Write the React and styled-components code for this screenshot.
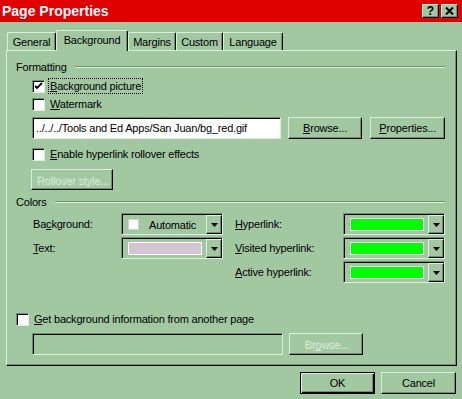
import React from 'react';
import styled, { createGlobalStyle } from 'styled-components';

const FACE = '#a2c8a2';
const LIGHT = '#dcefdc';
const SHADOW = '#6f8f6f';
const DARK = '#000';

const Global = createGlobalStyle`
  html, body { margin: 0; padding: 0; background: ${FACE}; }
  body { font-family: "Liberation Sans", Arial, sans-serif; font-size: 11px; letter-spacing: -0.2px; color: #000; }
  * { box-sizing: border-box; }
`;

const Window = styled.div`
  width: 462px;
  height: 399px;
  background: ${FACE};
  display: flex;
  flex-direction: column;
  overflow: hidden;
`;

const TitleBar = styled.div`
  height: 22px;
  background: #e00000;
  display: flex;
  align-items: center;
  padding: 0 4px 0 2px;
`;

const Title = styled.div`
  flex: 1;
  color: #fff;
  font-weight: bold;
  font-size: 14px;
  letter-spacing: 0;
`;

const TitleButton = styled.div`
  width: 17px;
  height: 14px;
  margin-left: ${p => p.$gap || 0}px;
  background: ${FACE};
  border-top: 1px solid ${LIGHT};
  border-left: 1px solid ${LIGHT};
  border-right: 1px solid ${DARK};
  border-bottom: 1px solid ${DARK};
  box-shadow: inset -1px -1px 0 ${SHADOW};
  display: flex;
  align-items: center;
  justify-content: center;
  font-weight: bold;
  font-size: 12px;
  line-height: 12px;
  letter-spacing: 0;
`;

const TabRow = styled.div`
  display: flex;
  align-items: flex-end;
  height: 20px;
  margin-top: 8px;
  padding-left: 7px;
  position: relative;
  z-index: 2;
`;

const Tab = styled.div`
  width: ${p => p.$w}px;
  height: ${p => (p.$active ? 21 : 18)}px;
  margin-bottom: ${p => (p.$active ? -1 : 0)}px;
  background: ${FACE};
  border-top: 1px solid ${LIGHT};
  border-left: 1px solid ${LIGHT};
  border-right: 1px solid ${DARK};
  border-radius: 2px 2px 0 0;
  box-shadow: inset -1px 0 0 ${SHADOW};
  display: flex;
  align-items: center;
  justify-content: center;
  padding-bottom: ${p => (p.$active ? 3 : 0)}px;
  position: relative;
  z-index: ${p => (p.$active ? 2 : 1)};
`;

const Panel = styled.div`
  margin: 0 5px 0 6px;
  height: 316px;
  border-top: 1px solid ${LIGHT};
  border-left: 1px solid ${LIGHT};
  border-right: 1px solid ${DARK};
  border-bottom: 1px solid ${DARK};
  box-shadow: inset -1px -1px 0 ${SHADOW};
  padding: 9px 11px 10px 9px;
  display: flex;
  flex-direction: column;
`;

const GroupHeader = styled.div`
  display: flex;
  align-items: center;
  height: 14px;
  gap: 8px;
  margin-top: ${p => p.$mt || 0}px;
  &::after {
    content: '';
    flex: 1;
    border-top: 1px solid ${SHADOW};
    border-bottom: 1px solid ${LIGHT};
  }
`;

const CheckRow = styled.div`
  display: flex;
  align-items: center;
  height: 16px;
  gap: 3px;
  margin-top: ${p => p.$mt || 0}px;
  padding-left: ${p => p.$indent || 0}px;
`;

const Box = styled.div`
  width: 13px;
  height: 13px;
  background: #fff;
  border-top: 1px solid ${SHADOW};
  border-left: 1px solid ${SHADOW};
  border-right: 1px solid ${LIGHT};
  border-bottom: 1px solid ${LIGHT};
  box-shadow: inset 1px 1px 0 ${DARK};
  display: flex;
  align-items: center;
  justify-content: center;
`;

const CheckLabel = styled.span`
  line-height: 14px;
  padding: 0 1px;
  border: 1px ${p => (p.$focus ? 'dotted #000' : 'solid transparent')};
`;

const FieldRow = styled.div`
  display: flex;
  align-items: center;
  height: 22px;
  margin-top: ${p => p.$mt || 0}px;
  padding-left: 16px;
`;

const TextField = styled.div`
  width: ${p => p.$w}px;
  height: 22px;
  background: ${p => (p.$disabled ? FACE : '#fff')};
  border-top: 1px solid ${SHADOW};
  border-left: 1px solid ${SHADOW};
  border-right: 1px solid ${LIGHT};
  border-bottom: 1px solid ${LIGHT};
  box-shadow: inset 1px 1px 0 ${DARK};
  padding: 0 2px 0 3px;
  display: flex;
  align-items: center;
  white-space: nowrap;
  overflow: hidden;
`;

const Button = styled.div`
  width: ${p => p.$w}px;
  height: ${p => p.$h || 22}px;
  margin-left: ${p => p.$ml || 0}px;
  background: ${FACE};
  border-top: 1px solid ${p => (p.$default ? DARK : LIGHT)};
  border-left: 1px solid ${p => (p.$default ? DARK : LIGHT)};
  border-right: 1px solid ${DARK};
  border-bottom: 1px solid ${DARK};
  box-shadow: ${p =>
    p.$default
      ? `inset 1px 1px 0 ${LIGHT}, inset -1px -1px 0 ${DARK}, inset -2px -2px 0 ${SHADOW}`
      : `inset -1px -1px 0 ${SHADOW}`};
  display: flex;
  align-items: center;
  justify-content: center;
  color: ${p => (p.$disabled ? '#b9d2b9' : '#000')};
  text-shadow: ${p => (p.$disabled ? `1px 1px 0 ${LIGHT}` : 'none')};
`;

const RolloverWrap = styled.div`
  margin-top: 7px;
  padding-left: 15px;
  display: flex;
`;

const ColorGrid = styled.div`
  margin-top: 4px;
  padding-left: 16px;
  display: grid;
  grid-template-columns: 89px 102px 120px 102px;
  grid-auto-rows: 22px;
  row-gap: 2px;
`;

const ColorLabel = styled.div`
  display: flex;
  align-items: center;
  padding-left: ${p => (p.$right ? 12 : 1)}px;
  grid-column: ${p => p.$col};
`;

const Dropdown = styled.div`
  grid-column: ${p => p.$col};
  height: 22px;
  display: flex;
  border-top: 1px solid ${SHADOW};
  border-left: 1px solid ${SHADOW};
  border-right: 1px solid ${LIGHT};
  border-bottom: 1px solid ${LIGHT};
  box-shadow: inset 1px 1px 0 ${DARK};
  padding: 1px 0 0 1px;
`;

const SwatchArea = styled.div`
  flex: 1;
  display: flex;
  align-items: center;
  padding: 0 4px 0 5px;
  gap: 10px;
`;

const Swatch = styled.div`
  flex: 1;
  height: 13px;
  background: ${p => p.$color};
  border: 1px solid #fff;
`;

const AutoBox = styled.div`
  width: 11px;
  height: 11px;
  background: #fff;
  border: 1px solid #c8d8c8;
`;

const ArrowButton = styled.div`
  width: 16px;
  background: ${FACE};
  border-top: 1px solid ${LIGHT};
  border-left: 1px solid ${LIGHT};
  border-right: 1px solid ${DARK};
  border-bottom: 1px solid ${DARK};
  box-shadow: inset -1px -1px 0 ${SHADOW};
  display: flex;
  align-items: center;
  justify-content: center;
`;

const Footer = styled.div`
  display: flex;
  justify-content: flex-end;
  gap: 6px;
  margin-top: 6px;
  padding-right: 6px;
`;

const Check = () => (
  <svg width="9" height="9" viewBox="0 0 9 9">
    <path d="M1 4 L3 6 L8 1" stroke="#000" strokeWidth="1.8" fill="none" />
  </svg>
);

const Arrow = () => (
  <svg width="7" height="4" viewBox="0 0 7 4">
    <path d="M0 0 H7 L3.5 4 Z" fill="#000" />
  </svg>
);

const CloseGlyph = () => (
  <svg width="9" height="8" viewBox="0 0 9 8">
    <path d="M1 0.5 L8 7.5 M8 0.5 L1 7.5" stroke="#000" strokeWidth="2" />
  </svg>
);

const ColorPicker = ({ col, color, auto }) => (
  <Dropdown $col={col}>
    <SwatchArea>
      {auto ? (
        <>
          <AutoBox />
          <span>Automatic</span>
        </>
      ) : (
        <Swatch $color={color} />
      )}
    </SwatchArea>
    <ArrowButton>
      <Arrow />
    </ArrowButton>
  </Dropdown>
);

export default function App() {
  return (
    <Window>
      <Global />
      <TitleBar>
        <Title>Page Properties</Title>
        <TitleButton>?</TitleButton>
        <TitleButton $gap={2}>
          <CloseGlyph />
        </TitleButton>
      </TitleBar>

      <TabRow>
        <Tab $w={49}>General</Tab>
        <Tab $w={72} $active>Background</Tab>
        <Tab $w={48}>Margins</Tab>
        <Tab $w={47}>Custom</Tab>
        <Tab $w={60}>Language</Tab>
      </TabRow>

      <Panel>
        <GroupHeader>Formatting</GroupHeader>
        <CheckRow $mt={4} $indent={16}>
          <Box><Check /></Box>
          <CheckLabel $focus><u>B</u>ackground picture</CheckLabel>
        </CheckRow>
        <CheckRow $mt={2} $indent={16}>
          <Box />
          <CheckLabel><u>W</u>atermark</CheckLabel>
        </CheckRow>
        <FieldRow $mt={5}>
          <TextField $w={250}>../../../Tools and Ed Apps/San Juan/bg_red.gif</TextField>
          <Button $w={75} $ml={7}><span><u>B</u>rowse...</span></Button>
          <Button $w={75} $ml={8}><span><u>P</u>roperties...</span></Button>
        </FieldRow>
        <CheckRow $mt={7} $indent={16}>
          <Box />
          <CheckLabel><u>E</u>nable hyperlink rollover effects</CheckLabel>
        </CheckRow>
        <RolloverWrap>
          <Button $w={82} $h={21} $disabled>Rollover style...</Button>
        </RolloverWrap>

        <GroupHeader $mt={5}>Colors</GroupHeader>
        <ColorGrid>
          <ColorLabel $col={1}><span>Ba<u>c</u>kground:</span></ColorLabel>
          <ColorPicker col={2} auto />
          <ColorLabel $col={3} $right><span><u>H</u>yperlink:</span></ColorLabel>
          <ColorPicker col={4} color="#00ff00" />

          <ColorLabel $col={1}><span><u>T</u>ext:</span></ColorLabel>
          <ColorPicker col={2} color="#d4c4d4" />
          <ColorLabel $col={3} $right><span><u>V</u>isited hyperlink:</span></ColorLabel>
          <ColorPicker col={4} color="#00ff00" />

          <ColorLabel $col={3} $right><span><u>A</u>ctive hyperlink:</span></ColorLabel>
          <ColorPicker col={4} color="#00ff00" />
        </ColorGrid>

        <CheckRow $mt={28}>
          <Box />
          <CheckLabel><u>G</u>et background information from another page</CheckLabel>
        </CheckRow>
        <FieldRow $mt={6}>
          <TextField $w={251} $disabled />
          <Button $w={74} $ml={6} $disabled><span>Br<u>o</u>wse...</span></Button>
        </FieldRow>
      </Panel>

      <Footer>
        <Button $w={75} $default>OK</Button>
        <Button $w={75}>Cancel</Button>
      </Footer>
    </Window>
  );
}
